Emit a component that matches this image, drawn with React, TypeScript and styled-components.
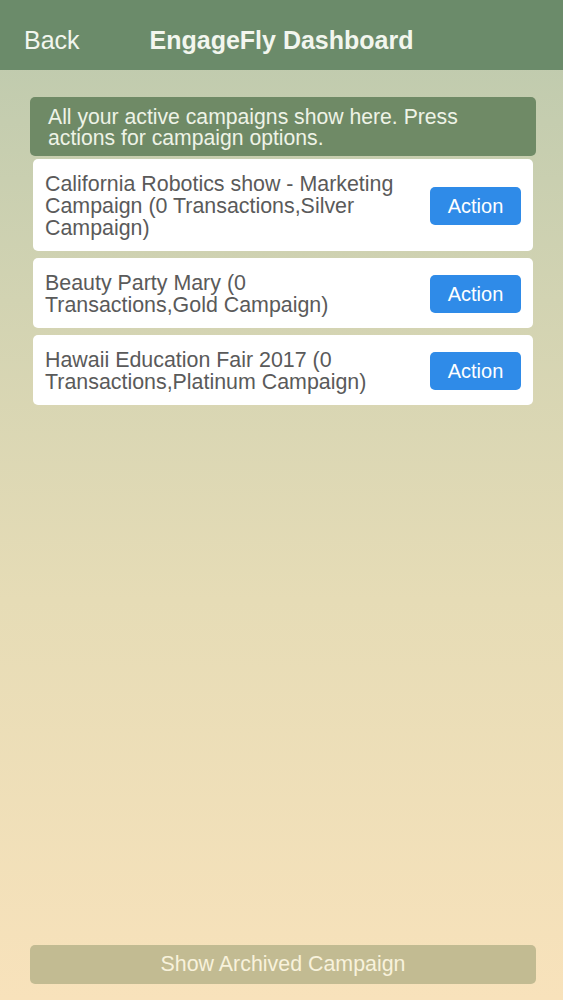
import React from "react";
import styled, { createGlobalStyle } from "styled-components";

const GlobalStyle = createGlobalStyle`
  html, body {
    margin: 0;
    padding: 0;
  }
  body {
    font-family: "Liberation Sans", Arial, sans-serif;
  }
`;

type Campaign = {
  id: number;
  title: string;
};

const campaigns: Campaign[] = [
  {
    id: 1,
    title:
      "California Robotics show - Marketing Campaign (0 Transactions,Silver Campaign)",
  },
  { id: 2, title: "Beauty Party Mary (0 Transactions,Gold Campaign)" },
  {
    id: 3,
    title: "Hawaii Education Fair 2017 (0 Transactions,Platinum Campaign)",
  },
];

const App = () => {
  return (
    <Screen>
      <GlobalStyle />
      <Header>
        <BackLink>Back</BackLink>
        <Title>EngageFly Dashboard</Title>
      </Header>
      <Content>
        <Notice>
          All your active campaigns show here. Press actions for campaign
          options.
        </Notice>
        <List>
          {campaigns.map((campaign) => (
            <Card key={campaign.id}>
              <CardText>{campaign.title}</CardText>
              <ActionButton>Action</ActionButton>
            </Card>
          ))}
        </List>
      </Content>
      <Footer>
        <ArchiveButton>Show Archived Campaign</ArchiveButton>
      </Footer>
    </Screen>
  );
};

const Screen = styled.div`
  width: 563px;
  height: 1000px;
  display: flex;
  flex-direction: column;
  background: linear-gradient(
    to bottom,
    #bcc9ad 0px,
    #d2d3b2 300px,
    #e6dcb6 600px,
    #f8e2bb 1000px
  );
  overflow: hidden;
`;

const Header = styled.div`
  position: relative;
  height: 70px;
  box-sizing: border-box;
  padding-top: 10px;
  flex-shrink: 0;
  display: flex;
  align-items: center;
  justify-content: center;
  background: #6b8b6a;
  color: #f2f6ee;
`;

const BackLink = styled.span`
  position: absolute;
  left: 24px;
  top: 10px;
  bottom: 0;
  display: flex;
  align-items: center;
  font-size: 25px;
`;

const Title = styled.h1`
  margin: 0;
  font-size: 25px;
  font-weight: bold;
`;

const Content = styled.div`
  flex: 1;
  display: flex;
  flex-direction: column;
  padding: 27px 27px 0 30px;
`;

const Notice = styled.div`
  background: #6f8a66;
  color: #eef3e6;
  border-radius: 5px;
  padding: 9px 18px 8px;
  font-size: 21.2px;
  line-height: 21px;
`;

const List = styled.div`
  display: flex;
  flex-direction: column;
  gap: 7px;
  margin: 3px 3px 0 3px;
`;

const Card = styled.div`
  display: flex;
  align-items: center;
  gap: 12px;
  background: #ffffff;
  border-radius: 5px;
  padding: 14px 12px 12px 12px;
`;

const CardText = styled.div`
  flex: 1;
  padding-right: 8px;
  color: #5a5a5a;
  font-size: 21.4px;
  line-height: 22px;
`;

const ActionButton = styled.button`
  flex-shrink: 0;
  width: 91px;
  height: 38px;
  border: none;
  border-radius: 5px;
  background: #2f8be8;
  color: #ffffff;
  font-family: inherit;
  font-size: 20px;
  padding: 0;
`;

const Footer = styled.div`
  padding: 0 27px 16px 30px;
`;

const ArchiveButton = styled.button`
  width: 100%;
  height: 39px;
  border: none;
  border-radius: 5px;
  background: #c2bb92;
  color: #f8f2dc;
  font-family: inherit;
  font-size: 21.4px;
  padding: 0;
`;

export default App;
